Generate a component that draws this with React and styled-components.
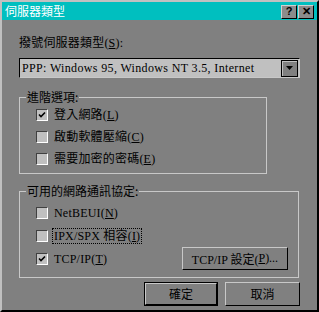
import React from "react";
import styled, { createGlobalStyle } from "styled-components";

const GlobalStyle = createGlobalStyle`
  html, body {
    margin: 0;
    padding: 0;
    background: #808080;
  }
  body {
    font-family: "Liberation Serif", "Noto Sans CJK TC", serif;
    font-size: 12px;
    color: #000;
  }
`;

const CheckMark = () => (
  <svg width="8" height="8" viewBox="0 0 8 8">
    <path d="M1 3.5 L3 5.5 L7 1.5" stroke="#000" strokeWidth="1.6" fill="none" />
  </svg>
);

const Check = ({ checked, label, mnemonic, suffix, focused, children }) => (
  <Row>
    <Box>{checked && <CheckMark />}</Box>
    <Label $focused={focused}>
      {label}(<u>{mnemonic}</u>){suffix}
    </Label>
    {children}
  </Row>
);

const App = () => {
  return (
    <>
      <GlobalStyle />
      <Window>
        <TitleBar>
          <Title>伺服器類型</Title>
          <TitleButtons>
            <TitleButton>?</TitleButton>
            <TitleButton>✕</TitleButton>
          </TitleButtons>
        </TitleBar>
        <Body>
          <FieldLabel>
            撥號伺服器類型(<u>S</u>):
          </FieldLabel>
          <Combo>
            <ComboText>PPP: Windows 95, Windows NT 3.5, Internet</ComboText>
            <ComboArrow>
              <svg width="7" height="4" viewBox="0 0 7 4">
                <path d="M0 0 H7 L3.5 4 Z" fill="#000" />
              </svg>
            </ComboArrow>
          </Combo>

          <Group $width={248} $pb={3}>
            <Legend>進階選項:</Legend>
            <Check checked label="登入網路" mnemonic="L" />
            <Check label="啟動軟體壓縮" mnemonic="C" />
            <Check label="需要加密的密碼" mnemonic="E" />
          </Group>

          <Group $width={280} $pt={3} $pb={7} $gap={10} $rowHeight={23}>
            <Legend>可用的網路通訊協定:</Legend>
            <Check label="NetBEUI" mnemonic="N" />
            <Check label="IPX/SPX 相容" mnemonic="I" focused />
            <Check checked label="TCP/IP" mnemonic="T">
              <SettingsButton $width={106} $height={23}>
                TCP/IP 設定(<u>P</u>)...
              </SettingsButton>
            </Check>
          </Group>

          <Actions>
            <DefaultButton>
              <PushButton $width={72} $height={22}>確定</PushButton>
            </DefaultButton>
            <PushButton $width={75} $height={24}>取消</PushButton>
          </Actions>
        </Body>
      </Window>
    </>
  );
};

const Window = styled.div`
  width: 319px;
  height: 312px;
  box-sizing: border-box;
  border: 2px solid;
  border-color: #c0c0c0 #000 #000 #c0c0c0;
  background: #808080;
  display: flex;
  flex-direction: column;
`;

const TitleBar = styled.div`
  height: 18px;
  background: #00bfbf;
  display: flex;
  align-items: center;
  justify-content: space-between;
  padding: 0 3px 0 3px;
`;

const Title = styled.span`
  color: #fff;
  font-size: 12px;
  line-height: 14px;
  padding-top: 2px;
`;

const TitleButtons = styled.div`
  display: flex;
  gap: 1px;
  margin-top: 1px;
`;

const TitleButton = styled.div`
  width: 16px;
  height: 14px;
  box-sizing: border-box;
  background: #8c8c8c;
  border: 1px solid;
  border-color: #d0d0d0 #000 #000 #d0d0d0;
  display: flex;
  align-items: center;
  justify-content: center;
  font-family: "Liberation Sans", sans-serif;
  font-weight: bold;
  font-size: 11px;
  line-height: 1;
`;

const Body = styled.div`
  display: flex;
  flex-direction: column;
  align-items: flex-start;
  padding: 16px 0 0 17px;
`;

const FieldLabel = styled.div`
  line-height: 14px;
  margin-bottom: 8px;
  letter-spacing: 0.2px;
`;

const Combo = styled.div`
  width: 281px;
  height: 20px;
  box-sizing: border-box;
  display: flex;
  align-items: center;
  justify-content: space-between;
  background: #c0c0c0;
  border: 1px solid;
  border-color: #000 #c8c8c8 #c8c8c8 #000;
  padding-right: 1px;
`;

const ComboText = styled.span`
  padding-left: 2px;
  font-size: 12px;
  letter-spacing: 0.35px;
  white-space: nowrap;
`;

const ComboArrow = styled.div`
  width: 17px;
  height: 17px;
  box-sizing: border-box;
  background: #808080;
  border: 1px solid #000;
  box-shadow: inset 1px 1px #c0c0c0;
  display: flex;
  align-items: center;
  justify-content: center;
`;

const Group = styled.fieldset`
  margin: 12px 0 0 0;
  width: ${(p) => p.$width}px;
  box-sizing: border-box;
  border: 1px solid #c8c8c8;
  padding: ${(p) => p.$pt || 0}px 0 ${(p) => p.$pb || 0}px 0;
  display: flex;
  flex-direction: column;
  --row-height: ${(p) => p.$rowHeight || 22}px;

  & + & {
    margin-top: ${(p) => p.$gap || 12}px;
  }
`;

const Legend = styled.legend`
  margin-left: 6px;
  padding: 0 1px;
  line-height: 14px;
  font-family: "Noto Sans CJK TC", sans-serif;
`;

const Row = styled.div`
  height: var(--row-height);
  display: flex;
  align-items: center;
  padding: 0 10px 0 16px;
`;

const Box = styled.div`
  width: 12px;
  height: 12px;
  box-sizing: border-box;
  background: #c0c0c0;
  border: 1px solid;
  border-color: #404040 #fff #fff #404040;
  display: flex;
  align-items: center;
  justify-content: center;
  margin-right: 5px;
  flex: none;
`;

const Label = styled.span`
  line-height: 14px;
  padding: 0 1px;
  letter-spacing: 0.2px;
  outline: ${(p) => (p.$focused ? "1px dotted #000" : "none")};
`;

const PushButton = styled.div`
  width: ${(p) => p.$width}px;
  height: ${(p) => p.$height}px;
  box-sizing: border-box;
  background: #808080;
  border: 1px solid;
  border-color: #c8c8c8 #000 #000 #c8c8c8;
  display: flex;
  align-items: center;
  justify-content: center;
  white-space: nowrap;
`;

const SettingsButton = styled(PushButton)`
  margin-left: auto;
`;

const DefaultButton = styled.div`
  border: 1px solid #000;
  display: flex;
`;

const Actions = styled.div`
  width: 281px;
  margin-top: 4px;
  display: flex;
  justify-content: flex-end;
  gap: 7px;
`;

export default App;
